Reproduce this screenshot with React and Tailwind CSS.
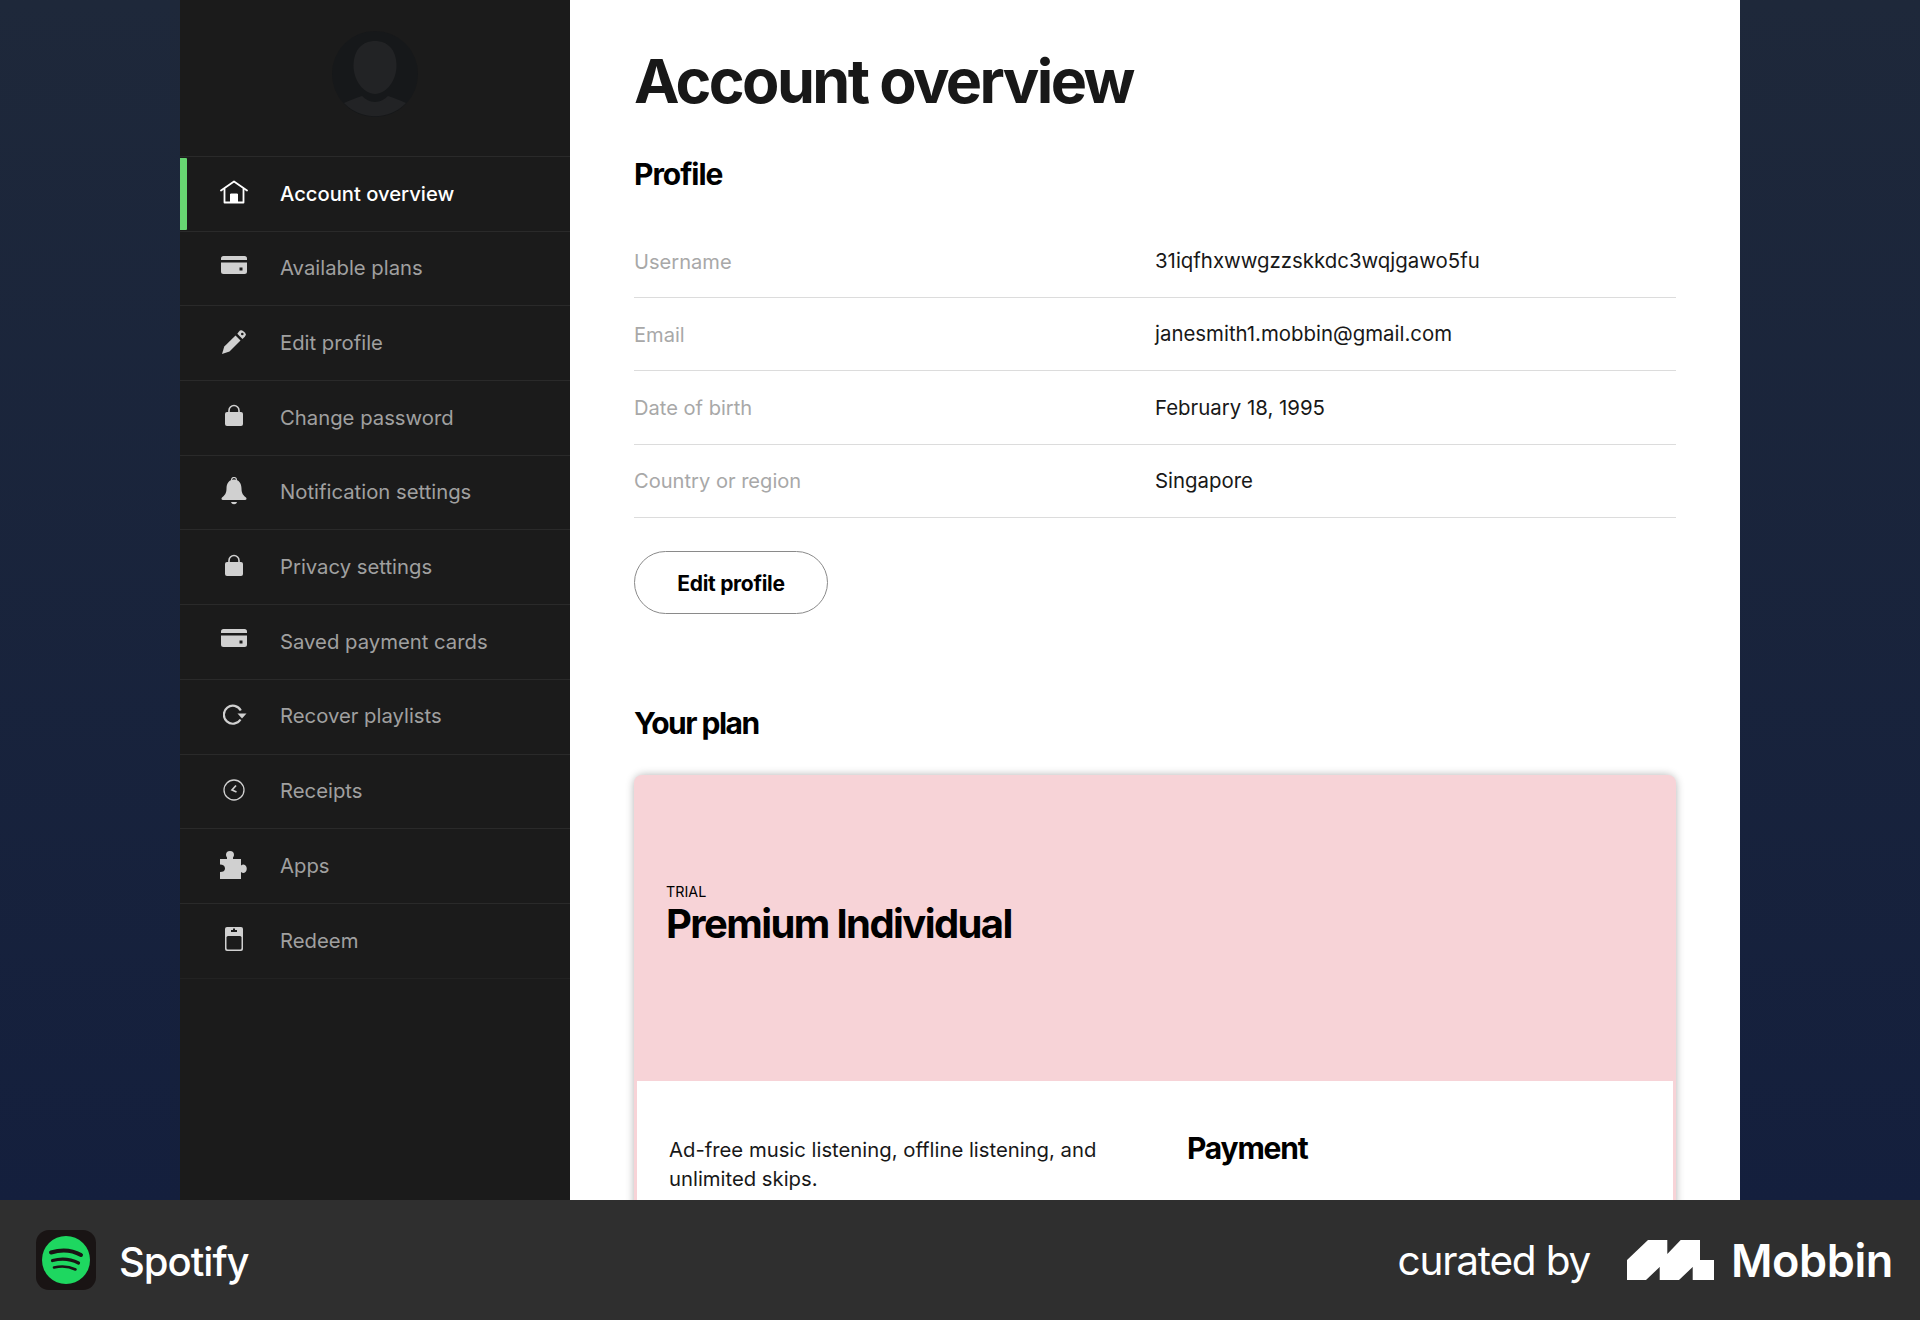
import React from "react";

const F = "font-['Inter','Liberation_Sans',sans-serif]";

const Home = () => (
  <svg viewBox="0 0 28 24" className="w-[28px] h-[24px] -mt-[4px]" fill="none" stroke="#fff" strokeWidth="1.8" strokeLinejoin="round" strokeLinecap="round">
    <path d="M1 10.500 14 1.500l13 9" />
    <path d="M4.500 9v13.500h19V9" />
    <path d="M10.500 22.500v-8.500h7v8.500" fill="#fff" strokeWidth="1" />
  </svg>
);
const Card = () => (
  <svg viewBox="0 0 26 18" className="w-[26px] h-[18px] -mt-[8px]">
    <path d="M2.500 0h21A2.500 2.500 0 0 1 26 2.500V4H0V2.500A2.500 2.500 0 0 1 2.500 0Z" fill="#d0d0d0" />
    <path d="M0 6.500h26v9a2.500 2.500 0 0 1-2.500 2.500h-21A2.500 2.500 0 0 1 0 15.500Z" fill="#d0d0d0" />
    <rect x="18.500" y="11.500" width="3" height="3" fill="#1b1b1b" />
  </svg>
);
const Pen = () => (
  <svg viewBox="0 0 26 26" className="w-[26px] h-[26px] -mt-[3px]" fill="#d0d0d0">
    <path d="M1 25 3.300 17.500 14.500 6.500l5 5L8.500 22.500Z" />
    <path d="M16.300 4.800l1.500-2a3.200 3.200 0 0 1 4.500-.600l1.200 1a3.200 3.200 0 0 1 .300 4.600L21.500 10Z" />
    <circle cx="21.300" cy="5" r="1.300" fill="#1b1b1b" />
  </svg>
);
const Lock = () => (
  <svg viewBox="0 0 18 22" className="w-[18px] h-[22px] -mt-[5px]" fill="#d0d0d0">
    <path d="M4 10V6.500a5 5 0 0 1 10 0V10" fill="none" stroke="#d0d0d0" strokeWidth="1.600" />
    <rect y="8" width="18" height="14" rx="2" />
  </svg>
);
const Bell = () => (
  <svg viewBox="0 0 26 28" className="w-[26px] h-[28px] -mt-[3px]" fill="#d0d0d0">
    <circle cx="13" cy="3" r="2.500" fill="none" stroke="#d0d0d0" strokeWidth="1.200" />
    <path d="M13 2.500c5 0 7.500 4 7.500 9 0 5 2 7 4.500 9 1 1 .500 2.500-1 2.500H2c-1.500 0-2-1.500-1-2.500 2.500-2 4.500-4 4.500-9 0-5 2.500-9 7.500-9Z" />
    <path d="M10 25h6c-.500 1.500-1.500 2.200-3 2.200S10.500 26.500 10 25Z" />
  </svg>
);
const Recover = () => (
  <svg viewBox="0 0 24 22" className="w-[24px] h-[22px] -mt-[4px] ml-[3px]" fill="none" stroke="#d0d0d0" strokeWidth="2.200">
    <path d="M17.500 15.500A9 9 0 1 1 17.800 6.500" />
    <path d="M14.500 9.500h9l-4.500 5Z" fill="#d0d0d0" stroke="none" />
  </svg>
);
const Clock = () => (
  <svg viewBox="0 0 22 22" className="w-[22px] h-[22px] -mt-[3px]" fill="none" stroke="#d0d0d0" strokeWidth="1.300">
    <circle cx="11" cy="11" r="10" />
    <path d="M13 6.500 9 11l4.500 2" strokeWidth="1.700" />
  </svg>
);
const Puzzle = () => (
  <svg viewBox="0 0 28 28" className="w-[28px] h-[28px] -mt-[3px]" fill="#d0d0d0">
    <path d="M10 0a4 4 0 0 1 4 4c0 1-.400 1.800-1 2.500V8h8v6.500c.700-.600 1.600-1 2.500-1a4.400 4.400 0 0 1 0 8.500c-.900 0-1.800-.400-2.500-1V28H0v-7c3.200 0 5-1 5-3.500S3 13.500 0 13.500V8h7V6.500C6.400 5.800 6 5 6 4a4 4 0 0 1 4-4Z" />
  </svg>
);
const Redeem = () => (
  <svg viewBox="0 0 18 24" className="w-[18px] h-[24px] -mt-[3px]">
    <rect width="18" height="24" rx="2" fill="#d0d0d0" />
    <rect x="1.500" y="9" width="15" height="13.500" rx="1.500" fill="#1b1b1b" />
    <rect x="6" y="3" width="6" height="2" fill="#1b1b1b" />
    <rect x="8" y="1.500" width="2" height="2" fill="#1b1b1b" />
  </svg>
);

const nav = [
  ["Account overview", Home, true],
  ["Available plans", Card],
  ["Edit profile", Pen],
  ["Change password", Lock],
  ["Notification settings", Bell],
  ["Privacy settings", Lock],
  ["Saved payment cards", Card],
  ["Recover playlists", Recover],
  ["Receipts", Clock],
  ["Apps", Puzzle],
  ["Redeem", Redeem],
];

const rows = [
  ["Username", "31iqfhxwwgzzskkdc3wqjgawo5fu"],
  ["Email", "janesmith1.mobbin@gmail.com"],
  ["Date of birth", "February 18, 1995"],
  ["Country or region", "Singapore"],
];

export default function App() {
  return (
    <div className={`h-[1320px] w-[1920px] overflow-hidden flex flex-col ${F}`}>
      <div className="h-[1200px] flex justify-center overflow-hidden bg-gradient-to-b from-[#1e283a] to-[#141f3d]">
        <aside className="w-[390px] bg-[#1b1b1b] shrink-0">
          <div className="h-[156px] flex justify-center pt-[31px]">
            <svg viewBox="0 0 86 86" className="w-[86px] h-[86px]">
              <circle cx="43" cy="43" r="43" fill="#16181a" />
              <path d="M43 10c12 0 21.500 8 21.500 25 0 14-10 28-21.500 28S21.500 49 21.500 35c0-17 9.500-25 21.500-25Z" fill="#222325" />
              <path d="M12 72c6-3 12-5 18-7 3 3 8 6 13 6s10-3 13-6c6 2 12 4 18 7a43 43 0 0 1-62 0Z" fill="#222325" />
            </svg>
          </div>
          {nav.map(([label, Icon, active]) => (
            <div key={label} className="relative h-[74.7px] border-t border-[#2a2a2a] flex items-center">
              {active && <div className="absolute left-0 top-[1px] bottom-[1px] w-[7px] bg-[#67d672] rounded-r-[1px]" />}
              <div className="w-[100px] shrink-0 flex justify-center pl-[7px]"><Icon /></div>
              <span className={active ? "text-[20.2px] text-white font-medium" : "text-[20.3px] text-[#a0a0a0]"}>{label}</span>
            </div>
          ))}
          <div className="border-t border-[#222]" />
        </aside>
        <main className="w-[1170px] bg-white px-[64px] shrink-0 text-[#181818]">
          <h1 className="text-[61px] leading-[72px] font-bold tracking-[-2.6px] pt-[45px]">Account overview</h1>
          <h2 className="text-[30px] leading-[40px] font-bold tracking-[-1.05px] mt-[37px] text-black">Profile</h2>
          <div className="mt-[31px]">
            {rows.map(([k, v]) => (
              <div key={k} className="h-[73.2px] flex items-center border-b border-[#dcdcdc]">
                <span className="w-[521px] pt-[1px] text-[20.1px] text-[#a8a8a8]">{k}</span>
                <span className="pt-[1px] text-[20.4px] text-[#181818]">{v}</span>
              </div>
            ))}
          </div>
          <button className="mt-[33px] block w-[194px] h-[63px] pt-[2px] rounded-full border border-[#8a8a8a] text-[21px] font-bold text-black tracking-[-.3px]">Edit profile</button>
          <h2 className="text-[30px] leading-[40px] font-bold tracking-[-1.5px] mt-[89px] text-black">Your plan</h2>
          <div className="mt-[32px] rounded-t-[10px] border-x-[3px] border-[#f7d3d7] shadow-[0_0_8px_rgba(0,0,0,0.3)]">
            <div className="h-[306px] bg-[#f7d3d7] rounded-t-[8px] -mx-[3px] flex flex-col justify-center pl-[32px] pb-[26px]">
              <div className="text-[14.300px] leading-[18px] text-black">TRIAL</div>
              <div className="text-[40px] leading-[46px] font-bold tracking-[-1.6px] text-black">Premium Individual</div>
            </div>
            <div className="bg-white flex pt-[54px] h-[200px]">
              <p className="w-[550px] shrink-0 pl-[32px] pr-[90px] text-[20.3px] leading-[29px] text-[#181818]">Ad-free music listening, offline listening, and unlimited skips.</p>
              <h3 className="text-[30px] leading-[26px] font-bold tracking-[-1.2px] text-black">Payment</h3>
            </div>
          </div>
        </main>
      </div>
      <footer className="h-[120px] bg-[#2f2f2f] flex items-center justify-between pl-[36px] pr-[27px] text-white">
        <div className="flex items-center">
          <svg viewBox="0 0 60 60" className="w-[60px] h-[60px]">
            <rect width="60" height="60" rx="13" fill="#191414" />
            <circle cx="30" cy="30" r="24" fill="#1ed760" />
            <g fill="none" stroke="#191414" strokeLinecap="round">
              <path d="M15 22.500c10-3 21-2.500 30 2.500" strokeWidth="4" />
              <path d="M16.500 30.500c9-2.500 18-1.700 26 2.500" strokeWidth="3.200" />
              <path d="M18 37.500c7.500-1.800 15-1.200 21.500 2" strokeWidth="2.600" />
            </g>
          </svg>
          <span className="ml-[23px] pt-[4px] text-[40px] font-medium tracking-[-1px]">Spotify</span>
        </div>
        <div className="flex items-center">
          <span className="text-[40.500px] pt-[2px] tracking-[-1.2px] mr-[37px]">curated by</span>
          <svg viewBox="0 0 87 40" className="w-[87px] h-[40px]">
            <path d="M0 40V20L21 0h19.300v14L53.700 0H73v20h14v20H65.700V27L52 40H32.700V27L19 40Z" fill="#fff" />
          </svg>
          <span className="ml-[17px] pt-[2px] text-[45px] font-semibold tracking-[-.4px]">Mobbin</span>
        </div>
      </footer>
    </div>
  );
}
